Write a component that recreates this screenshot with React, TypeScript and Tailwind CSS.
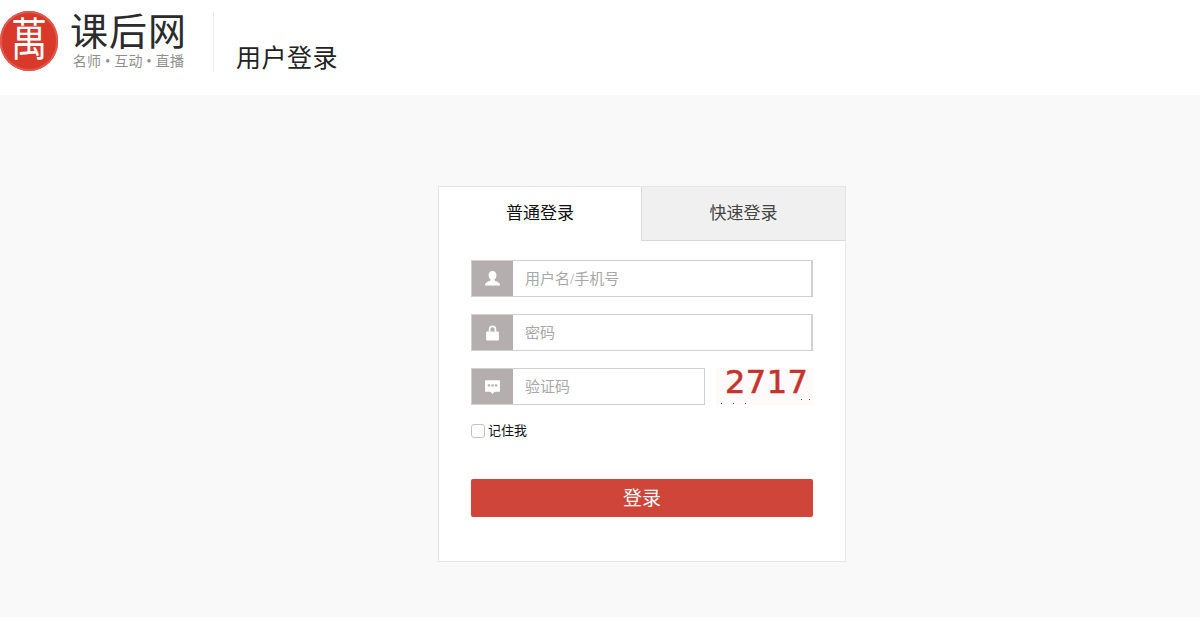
import React from 'react'

const cjk = "font-['Liberation_Serif','Noto_Sans_CJK_SC',serif]"

function UserIcon() {
  return (
    <svg width="17" height="17" viewBox="0 0 16 16" fill="#fff">
      <path d="M8 1c2.300 0 3.700 1.700 3.700 4 0 1.700-.8 3-1.600 3.800-.3.300-.3 1 .1 1.300.9.600 4.300 1.300 4.800 3.400v1H1v-1c.5-2.100 3.900-2.800 4.800-3.400.4-.3.4-1 .1-1.300C5.100 8 4.300 6.700 4.300 5 4.300 2.700 5.700 1 8 1z" />
    </svg>
  )
}

function LockIcon() {
  return (
    <svg width="17" height="17" viewBox="0 0 16 16" fill="#fff">
      <path d="M4.500 7V5a3.500 3.500 0 0 1 7 0v2H10V5a2 2 0 0 0-4 0v2z" />
      <rect x="2" y="7" width="12" height="8.500" rx="1" />
    </svg>
  )
}

function MessageIcon() {
  return (
    <svg width="17" height="17" viewBox="0 0 16 16">
      <path d="M1.500 2h13a.5.5 0 0 1 .5.500v10a.5.5 0 0 1-.5.500H10l-2 2-2-2H1.500a.5.5 0 0 1-.5-.500v-10a.5.5 0 0 1 .5-.500z" fill="#fff" />
      <rect x="3.500" y="6" width="2.200" height="2" fill="#b5aeae" />
      <rect x="6.900" y="6" width="2.200" height="2" fill="#b5aeae" />
      <rect x="10.300" y="6" width="2.200" height="2" fill="#b5aeae" />
    </svg>
  )
}

function Field({ icon, placeholder, className }: { icon: React.ReactNode; placeholder: string; className: string }) {
  return (
    <div className={`flex h-[37px] border border-[#d0d0d0] ${className}`}>
      <div className="flex w-[41px] shrink-0 items-center justify-center bg-[#b5aeae]">{icon}</div>
      <input
        className={`${cjk} min-w-0 flex-1 bg-white pt-[1px] pl-3 text-[15px] outline-none placeholder:text-[#a8a8a8]`}
        placeholder={placeholder}
      />
    </div>
  )
}

function App() {
  return (
    <div className={`${cjk} flex h-[617px] flex-col items-start bg-[#f9f9f9]`}>
      <header className="flex h-[95px] w-full shrink-0 bg-white pt-[11px]">
        <div className="flex h-[60px] w-[58px] items-center justify-center overflow-hidden rounded-full bg-[#d8392b] shadow-[inset_0_0_0_2px_#e0584c]">
          <span className="scale-y-[1.25] text-[36px] leading-none text-white">萬</span>
        </div>
        <div className="ml-[11px] flex w-[119px] flex-col items-center">
          <span className="text-[38px] leading-[43px] tracking-[1px] text-[#2b2b2b]">课后网</span>
          <span className="mt-[-1px] text-[14px] leading-[17px] tracking-[0.3px] whitespace-nowrap text-[#8f8f8f]">名师 • 互动 • 直播</span>
        </div>
        <div className="mt-[1px] ml-[25px] h-[60px] w-px bg-[#ececec]" />
        <h1 className="mt-[30px] ml-[22px] text-[25px] leading-9 tracking-[0.5px] text-[#222]">用户登录</h1>
      </header>

      <main className="mt-[91px] ml-[438px] h-[376px] w-[408px] border border-[#e6e6e6] bg-white">
        <div className="flex h-[54px]">
          <div className="flex w-[202px] items-center justify-center text-[17px] text-[#111]">普通登录</div>
          <div className="flex flex-1 items-center justify-center border-b border-l border-[#d8d8d8] bg-[#f0f0f0] text-[17px] text-[#444]">
            快速登录
          </div>
        </div>

        <div className="flex flex-col px-[32px] pt-[19px]">
          <Field icon={<UserIcon />} placeholder="用户名/手机号" className="w-[342px] border-r-2" />
          <Field icon={<LockIcon />} placeholder="密码" className="mt-[17px] w-[342px] border-r-2" />
          <div className="mt-[17px] flex">
            <Field icon={<MessageIcon />} placeholder="验证码" className="w-[234px]" />
            <div className="relative ml-[11px] h-[37px] w-[97px] bg-[#fffafa] pl-[9px]">
              <span className="block font-['DejaVu_Sans',sans-serif] text-[32px] leading-[28px] tracking-[0.5px] text-[#c5332e] [-webkit-text-stroke:0.6px_#c5332e]">
                2717
              </span>
              <i className="absolute top-[35px] left-[5px] h-px w-px bg-[#333]" />
              <i className="absolute top-[35px] left-[17px] h-px w-px bg-[#555]" />
              <i className="absolute top-[35px] left-[29px] h-px w-px bg-[#555]" />
              <i className="absolute top-[31px] left-[85px] h-px w-px bg-[#555]" />
              <i className="absolute top-[31px] left-[93px] h-px w-px bg-[#555]" />
            </div>
          </div>
          <label className="mt-[19px] flex h-[14px] items-center text-[13px] leading-[14px] text-[#111]">
            <input type="checkbox" className="h-[14px] w-[14px] appearance-none rounded-[3px] border border-[#c4c4c4] bg-white" />
            <span className="ml-[3px]">记住我</span>
          </label>
          <button className="mt-[41px] h-[38px] w-[342px] rounded-[2px] bg-[#d0453a] pt-[3px] text-[19px] text-white">登录</button>
        </div>
      </main>
    </div>
  )
}

export default App
